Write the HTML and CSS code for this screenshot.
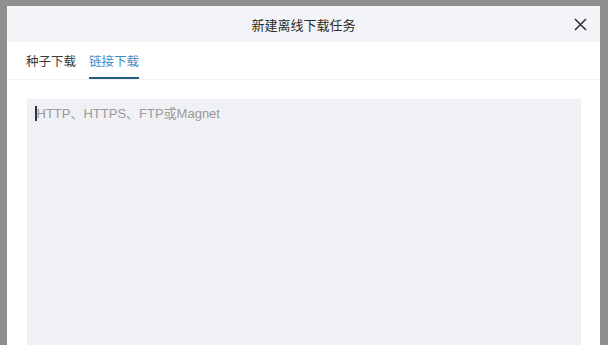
FILE: index.html
```html
<!DOCTYPE html>
<html lang="zh-CN">
<head>
<meta charset="utf-8">
<title>新建离线下载任务</title>
<link rel="stylesheet" href="styles.css">
</head>
<body>
<div class="dialog">
  <div class="header">
    <span class="title">新建离线下载任务</span>
    <button class="close" aria-label="关闭">
      <svg width="13" height="13" viewBox="0 0 13 13"><path d="M1 1 L12 12 M12 1 L1 12" stroke="#2e2e2e" stroke-width="1.5" fill="none"/></svg>
    </button>
  </div>
  <div class="tabs">
    <span class="tab">种子下载</span>
    <span class="tab active">链接下载</span>
  </div>
  <div class="body">
    <div class="input">
      <span class="caret"></span><span class="placeholder">HTTP、HTTPS、FTP或Magnet</span>
    </div>
  </div>
</div>
</body>
</html>
```
FILE: styles.css
```css
html, body {
  margin: 0;
  padding: 0;
}
body {
  background: #8f8f8f;
  font-family: "Liberation Sans", "Noto Sans CJK SC", sans-serif;
  height: 100vh;
  overflow: hidden;
  display: flex;
  flex-direction: column;
}
.dialog {
  margin: 6px 8px 0 7px;
  background: #ffffff;
  flex: 1;
  min-height: 0;
  display: flex;
  flex-direction: column;
}
.header {
  position: relative;
  height: 36px;
  flex: none;
  background: #f3f4f7;
  display: flex;
  align-items: center;
  justify-content: center;
}
.title {
  font-size: 13px;
  color: #2b2b2b;
  font-family: "Noto Sans CJK SC", sans-serif;
}
.close {
  position: absolute;
  right: 13px;
  top: 12px;
  border: 0;
  background: transparent;
  padding: 0;
  width: 13px;
  height: 13px;
  display: flex;
}
.tabs {
  height: 37px;
  flex: none;
  display: flex;
  gap: 13px;
  padding-left: 19px;
  border-bottom: 1px solid #eef0f3;
  align-items: stretch;
}
.tab {
  font-size: 12.5px;
  font-family: "Noto Sans CJK SC", sans-serif;
  color: #3a3a3a;
  display: flex;
  align-items: center;
  padding-top: 2px;
  box-sizing: border-box;
  border-bottom: 2px solid transparent;
}
.tab.active {
  color: #3f8dc6;
  border-bottom-color: #24607e;
}
.body {
  flex: 1;
  min-height: 0;
  display: flex;
  flex-direction: column;
  padding: 19px 19px 0 20px;
}
.input {
  flex: 1;
  background: #f0f1f4;
  padding: 7px 8px 0;
  display: flex;
  align-items: flex-start;
}
.caret {
  width: 1.5px;
  height: 15px;
  background: #333;
}
.placeholder {
  font-size: 13px;
  line-height: 15px;
  color: #9a9a9a;
}
```
